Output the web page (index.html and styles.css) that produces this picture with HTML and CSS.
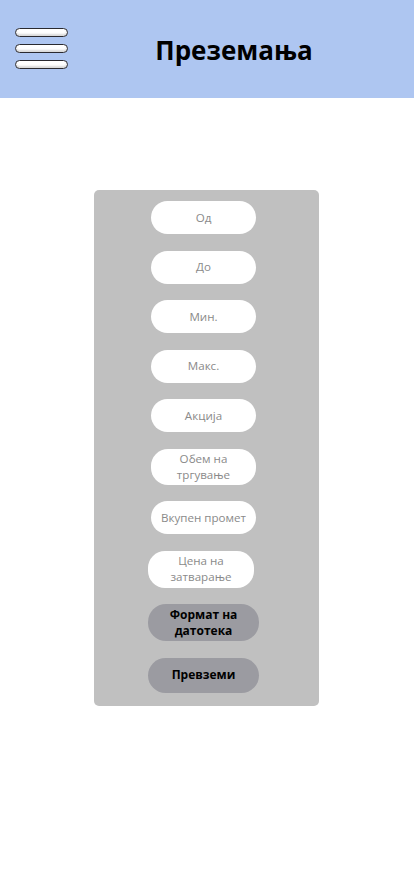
FILE: index.html
```html
<!DOCTYPE html>
<html lang="mk">
<head>
<meta charset="utf-8">
<title>Преземања</title>
<link rel="stylesheet" href="styles.css">
</head>
<body>
<header class="topbar">
  <div class="burger">
    <span class="bar"></span>
    <span class="bar"></span>
    <span class="bar"></span>
  </div>
  <h1 class="title">Преземања</h1>
</header>
<main class="content">
  <section class="panel">
    <div class="pill">Од</div>
    <div class="pill">До</div>
    <div class="pill">Мин.</div>
    <div class="pill">Макс.</div>
    <div class="pill">Акција</div>
    <div class="pill tall">Обем на<br>тргување</div>
    <div class="pill">Вкупен промет</div>
    <div class="pill tall2 shift">Цена на<br>затварање</div>
    <div class="btn tall2">Формат на<br>датотека</div>
    <div class="btn short">Превземи</div>
  </section>
</main>
</body>
</html>
```
FILE: styles.css
```css
* { box-sizing: border-box; }
html, body { margin: 0; padding: 0; background: #fff; }
body { font-family: "Open Sans", "Noto Sans", sans-serif; width: 414px; }

.topbar {
  height: 98px;
  background: #aec6f1;
  display: flex;
  align-items: center;
  padding-left: 15px;
}
.burger {
  display: flex;
  flex-direction: column;
  gap: 7px;
  width: 53px;
  margin-top: -1px;
}
.bar {
  display: block;
  height: 9px;
  background: #fff;
  border: 1.5px solid #2a2a30;
  border-radius: 5px;
  box-shadow: inset 0 -2px 2px rgba(0,0,0,0.15);
}
.title {
  flex: 1;
  margin: 0;
  padding-right: 14px;
  text-align: center;
  font-size: 26px;
  font-weight: 700;
  color: #000;
  line-height: 1;
  margin-top: 1px;
}

.content {
  padding-top: 92px;
  padding-left: 94px;
}
.panel {
  width: 225px;
  background: #c0c0c0;
  border-radius: 5px;
  padding: 11px 0 13px 57px;
  display: flex;
  flex-direction: column;
  align-items: flex-start;
  gap: 16.5px;
}
.pill {
  width: 105px;
  height: 33px;
  background: #fff;
  border-radius: 17px;
  display: flex;
  align-items: center;
  justify-content: center;
  text-align: center;
  font-size: 11.6px;
  line-height: 16px;
  color: #8a8a8a;
}
.pill.tall { height: 36px; }
.tall2 { height: 37px; }
.pill.shift { margin-left: -3px; width: 106px; }
.btn {
  width: 111px;
  height: 37px;
  margin-left: -3px;
  background: #9b9ba1;
  border-radius: 18px;
  display: flex;
  align-items: center;
  justify-content: center;
  text-align: center;
  font-size: 12px;
  font-weight: 700;
  line-height: 16px;
  color: #000;
}
.btn.short { height: 35px; }
```
